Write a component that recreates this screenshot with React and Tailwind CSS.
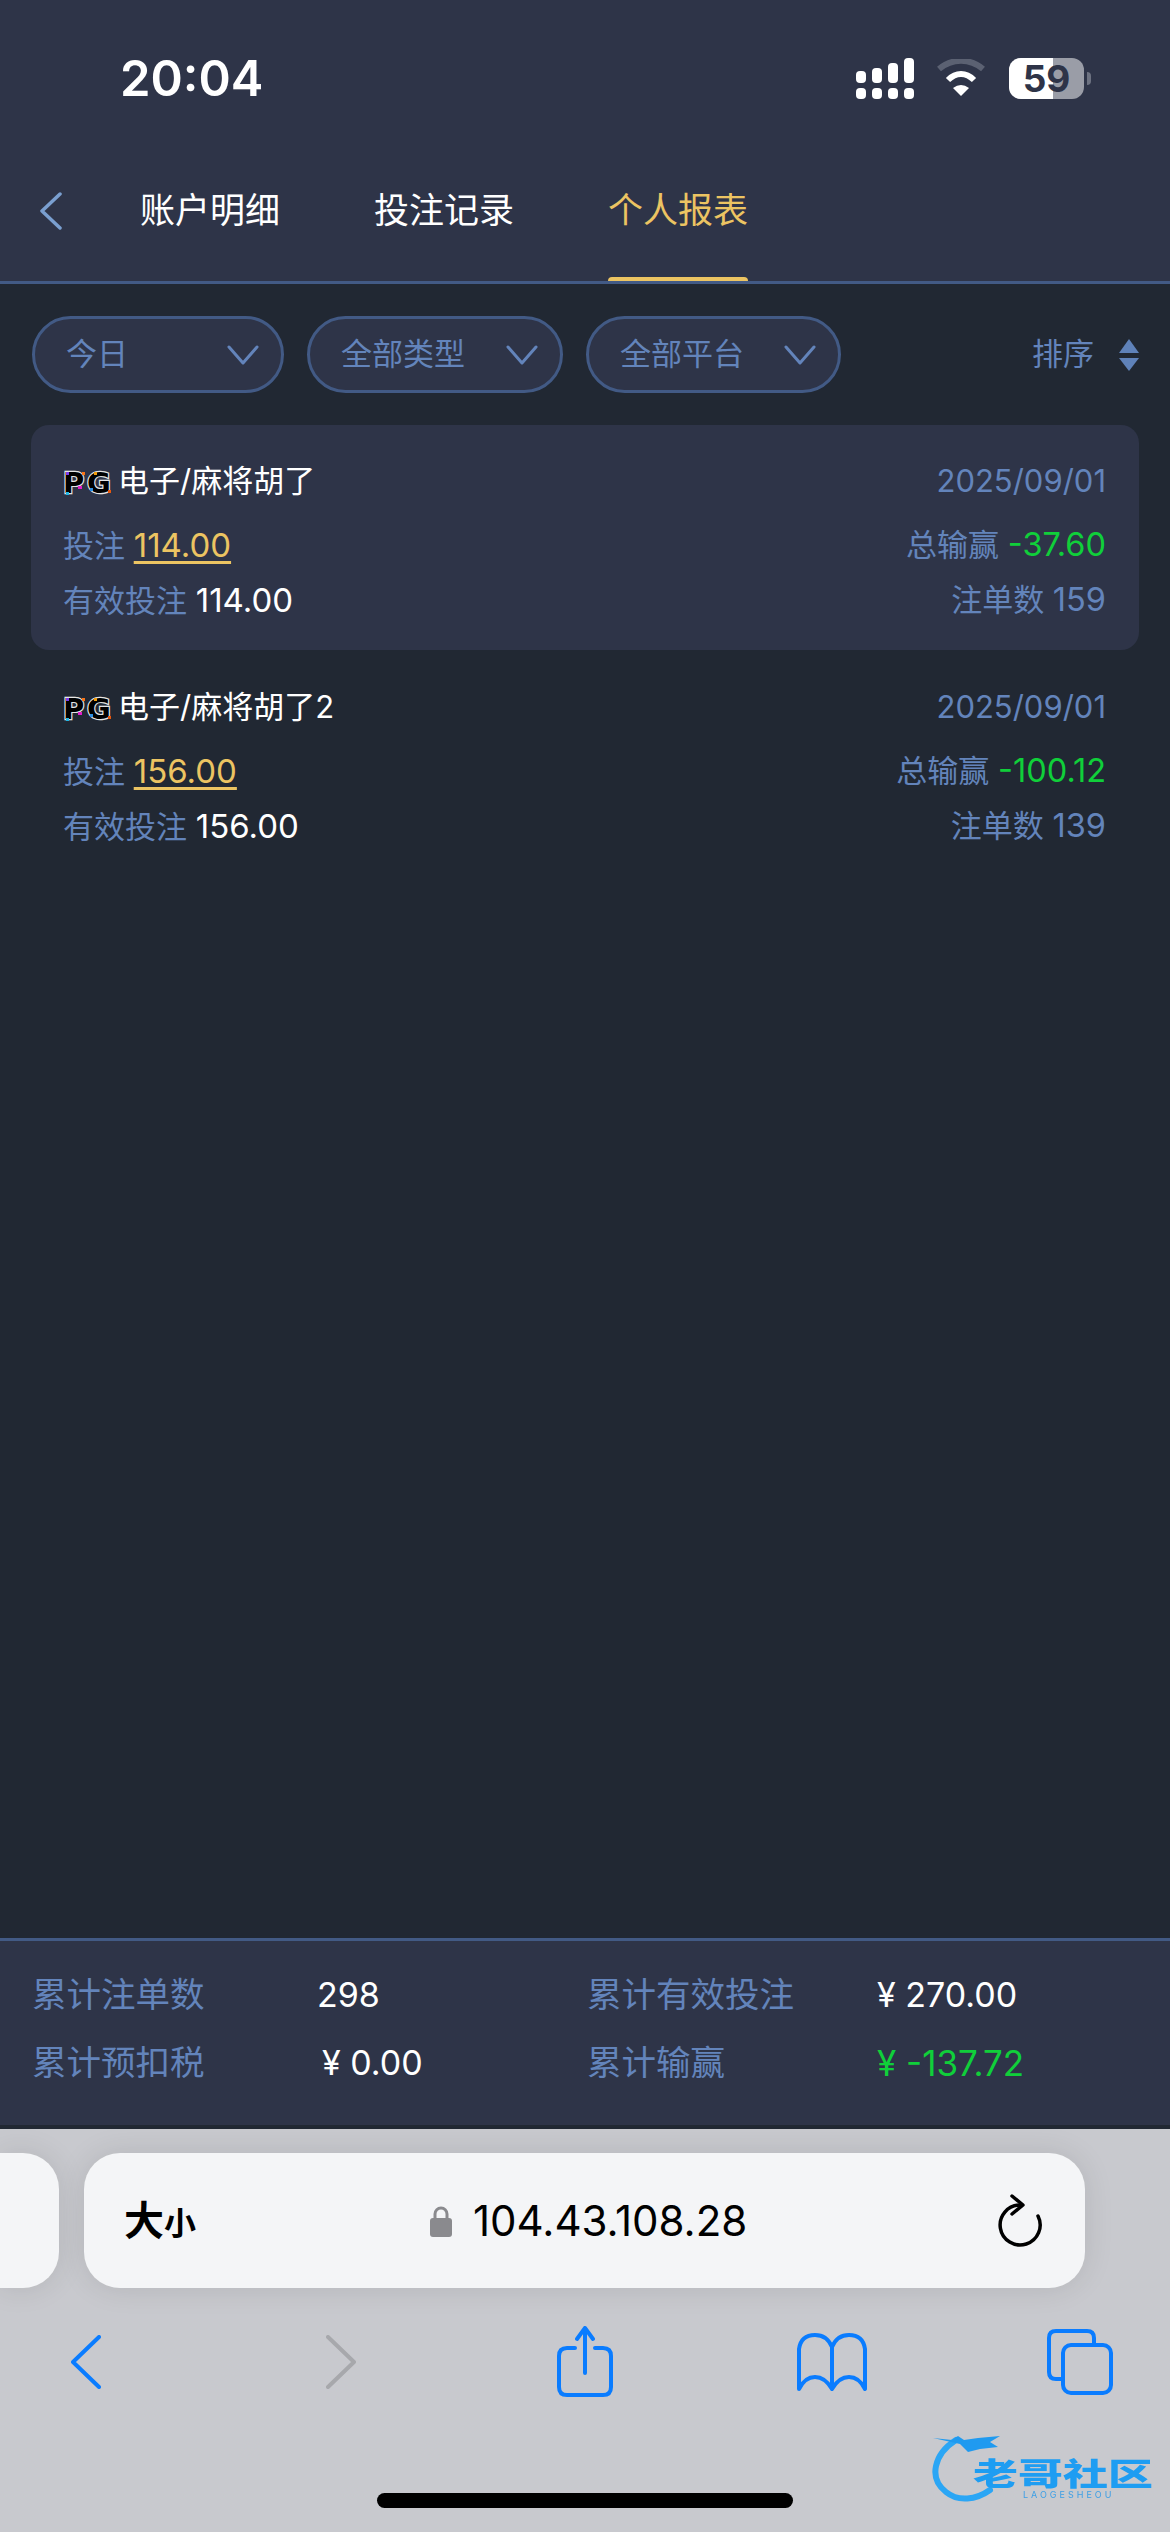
import React from 'react';

const records = [
  {name: '电子/麻将胡了', bet: '114.00', win: '-37.60', count: '159', date: '2025/09/01', active: true},
  {name: '电子/麻将胡了2', bet: '156.00', win: '-100.12', count: '139', date: '2025/09/01', active: false},
];

const PgLogo = () => (
  <svg width="50" height="38" viewBox="0 0 50 38" className="shrink-0">
    <g transform="translate(0 8)">
      <text x="0" y="23" fontFamily="DejaVu Sans" fontWeight="700" fontSize="29" fill="#000" stroke="#e5e5e5" strokeWidth="2.4" paintOrder="stroke">P</text>
      <text x="24" y="23" fontFamily="DejaVu Sans" fontWeight="700" fontSize="29" fill="#000" stroke="#e5e5e5" strokeWidth="2.4" paintOrder="stroke">G</text>
      <rect x="3" y="2" width="3" height="3" fill="#7c3aed" />
      <rect x="19" y="2" width="3" height="3" fill="#f97316" />
      <rect x="15" y="16" width="4" height="3" fill="#e11ecb" />
      <rect x="3" y="22" width="3" height="3" fill="#22b8e6" />
      <rect x="31" y="2" width="3" height="3" fill="#f59e0b" />
      <rect x="27" y="18" width="3" height="3" fill="#2f8ee0" />
      <rect x="45" y="20" width="3" height="3" fill="#ea580c" />
    </g>
  </svg>
);

const Chevron = () => (
  <svg width="32" height="20" viewBox="0 0 32 20" fill="none" stroke="#6384bb" strokeWidth="3" strokeLinecap="round" strokeLinejoin="round" className="shrink-0">
    <path d="M2 2 L16 18 L30 2" />
  </svg>
);

const Filter = ({label, width}) => (
  <div className={`flex items-center justify-between h-[77px] rounded-full border-[3px] border-[#425a85] bg-[#2e3448] pl-[31px] pr-[22px] ${width}`}>
    <span className="text-[31px] text-[#6384bb]">{label}</span>
    <Chevron />
  </div>
);

const RecordCard = ({item}) => (
  <div className={`mx-[31px] h-[225px] pl-[32px] pr-[33px] pt-[36px] rounded-[18px] text-[31px] leading-[40px] text-[#6384bb] ${item.active ? 'bg-[#2e3448]' : ''}`}>
    <div className="flex justify-between h-[40px]">
      <div className="flex items-center gap-[5px] text-white">
        <PgLogo />
        <span>{item.name}</span>
      </div>
      <span>{item.date}</span>
    </div>
    <div className="flex justify-between mt-[24px]">
      <span>投注 <span className="text-[33px] text-[#ecc462] underline underline-offset-[4px] decoration-[3px]">{item.bet}</span></span>
      <span>总输赢 <span className="text-[32.5px] text-[#10cf3a]">{item.win}</span></span>
    </div>
    <div className="flex justify-between mt-[14px]">
      <span>有效投注 <span className="text-[33px] text-white">{item.bet}</span></span>
      <span>注单数 <span className="text-[32.5px]">{item.count}</span></span>
    </div>
  </div>
);

const StatusBar = () => (
  <div className="flex items-center justify-between h-[140px] pt-[16px] pl-[120px] pr-[79px]">
    <span className="text-[49px] font-semibold text-white leading-none font-['Inter']">20:04</span>
    <div className="flex items-center">
      <svg width="58" height="41" viewBox="0 0 58 41" fill="#fff">
        <rect x="0" y="13" width="10" height="12" rx="4" />
        <rect x="16" y="10" width="10" height="15" rx="4" />
        <rect x="32" y="5" width="10" height="20" rx="4" />
        <rect x="48" y="0" width="10" height="25" rx="4" />
        <rect x="0" y="30" width="10" height="11" rx="4" />
        <rect x="16" y="30" width="10" height="11" rx="4" />
        <rect x="32" y="30" width="10" height="11" rx="4" />
        <rect x="48" y="30" width="10" height="11" rx="4" />
      </svg>
      <svg width="50" height="38" viewBox="0 0 50 38" fill="none" className="ml-[22px]">
        <path d="M3 10 C16 -1, 34 -1, 47 10" stroke="#5b6172" strokeWidth="6" />
        <path d="M12 21 C20 13, 30 13, 38 21" stroke="#fff" strokeWidth="6" />
        <path d="M17 29 Q25 23 33 29 L25 37 Z" fill="#fff" />
      </svg>
      <div className="relative ml-[23px] w-[75px] h-[41px] rounded-[12px] bg-[#9a9da7]">
        <div className="w-[44px] h-full rounded-l-[12px] bg-white" />
        <span className="absolute inset-0 flex items-center justify-center text-[37px] leading-none font-bold text-[#2e3448] font-['Inter']">59</span>
      </div>
      <div className="ml-[3px] w-[4px] h-[13px] rounded-r-full bg-[#6d7281]" />
    </div>
  </div>
);

const Tabs = () => (
  <div className="flex items-center h-[141px] pl-[39px]">
    <svg width="24" height="38" viewBox="0 0 24 38" fill="none" stroke="#7a9fd0" strokeWidth="3.5" strokeLinecap="round" strokeLinejoin="round">
      <path d="M21 2 L3 19 L21 36" />
    </svg>
    <div className="flex self-stretch items-center ml-[77px] gap-[94px] text-[35px] text-white">
      <span>账户明细</span>
      <span>投注记录</span>
      <span className="relative self-stretch flex items-center text-[#ecc462]">
        个人报表
        <span className="absolute bottom-0 left-0 right-0 h-[4px] rounded-t-[4px] bg-[#ecc462]" />
      </span>
    </div>
  </div>
);

const Summary = () => (
  <div className="h-[191px] border-t-[3px] border-b-[4px] border-t-[#425a85] border-b-[#212833] bg-[#2e3448] pt-[20px] pl-[32px] text-[34.5px] leading-[68px] text-[#6384bb]">
    <div className="grid grid-cols-[285px_270px_290px_1fr]">
      <span>累计注单数</span>
      <span className="text-white text-[34px]">298</span>
      <span>累计有效投注</span>
      <span className="text-white text-[34px]">¥ 270.00</span>
      <span>累计预扣税</span>
      <span className="text-white text-[34px] pl-[5px]">¥ 0.00</span>
      <span>累计输赢</span>
      <span className="text-[#10cf3a] text-[35px]">¥ -137.72</span>
    </div>
  </div>
);

const Toolbar = () => (
  <div className="flex items-center mt-[38px] h-[71px] pl-[71px]">
    <svg width="30" height="54" viewBox="0 0 30 54" fill="none" stroke="#0a7cff" strokeWidth="4" strokeLinecap="round" strokeLinejoin="round">
      <path d="M28 2 L2 27 L28 52" />
    </svg>
    <svg width="30" height="54" viewBox="0 0 30 54" fill="none" stroke="#a7a8ac" strokeWidth="4" strokeLinecap="round" strokeLinejoin="round" className="ml-[225px]">
      <path d="M2 2 L28 27 L2 52" />
    </svg>
    <svg width="56" height="71" viewBox="0 0 56 71" fill="none" stroke="#0a7cff" strokeWidth="4" strokeLinecap="round" strokeLinejoin="round" className="ml-[201px]">
      <path d="M28 47 V2 M20 13 L28 2 L36 13" />
      <path d="M18 22 H10 Q2 22 2 30 V61 Q2 69 10 69 H46 Q54 69 54 61 V30 Q54 22 46 22 H38" />
    </svg>
    <svg width="70" height="58" viewBox="0 0 70 58" fill="none" stroke="#0a7cff" strokeWidth="4" strokeLinejoin="round" className="ml-[184px]">
      <path d="M35 14 Q30 2 18 2 Q4 2 2 16 V56 Q8 44 18 44 Q28 44 35 56 Q42 44 52 44 Q62 44 68 56 V16 Q66 2 52 2 Q40 2 35 14 V56" />
    </svg>
    <svg width="66" height="66" viewBox="0 0 66 66" fill="none" stroke="#0a7cff" strokeWidth="4" strokeLinejoin="round" className="ml-[180px]">
      <path d="M15 50 H9 Q2 50 2 43 V9 Q2 2 9 2 H40 Q47 2 47 9 V16" />
      <rect x="16" y="16" width="48" height="48" rx="8" />
    </svg>
  </div>
);

const Watermark = () => (
  <div className="absolute left-[930px] top-[2430px] w-[225px] h-[76px] blur-[0.7px]">
    <svg width="100" height="76" viewBox="0 0 100 76" fill="none" className="absolute left-0 top-0">
      <path d="M26 10 C4 24, -2 48, 16 62 C28 72, 46 70, 60 60" stroke="#2ba6f5" strokeWidth="6" strokeLinecap="round" />
      <path d="M3 8 L22 10 L28 6 L34 10 L48 8 L70 6 L60 12 L68 17 L50 19 L38 22 L30 14 Z" fill="#1f9af0" />
    </svg>
    <span className="absolute left-[43px] top-[22px] scale-y-[0.68] whitespace-nowrap text-[45px] leading-[44px] font-black text-[#1e9df2]">老哥社区</span>
    <span className="absolute left-[93px] top-[60px] whitespace-nowrap text-[9px] leading-[10px] tracking-[3px] text-[#3c9fe6]">LAOGESHEOU</span>
  </div>
);

export default function App() {
  return (
    <div className="relative flex flex-col h-[2532px] w-[1170px] overflow-hidden bg-[#212833] font-['Inter','Noto_Sans_CJK_SC',sans-serif]">
      <header className="h-[284px] shrink-0 border-b-[3px] border-[#425a85] bg-[#2e3448]">
        <StatusBar />
        <Tabs />
      </header>

      <main className="flex-1">
        <div className="flex items-center pt-[32px] pb-[32px] pl-[32px] pr-[31px] gap-[23px]">
          <Filter label="今日" width="w-[252px]" />
          <Filter label="全部类型" width="w-[256px]" />
          <Filter label="全部平台" width="w-[255px]" />
          <div className="ml-auto flex items-center gap-[25px] text-[31px] text-[#6384bb]">
            <span>排序</span>
            <svg width="20" height="32" viewBox="0 0 20 32" fill="#5f82b9">
              <path d="M10 0 L20 14 H0 Z" />
              <path d="M0 19 H20 L10 32 Z" />
            </svg>
          </div>
        </div>
        <div className="flex flex-col gap-[1px]">
          {records.map(item => <RecordCard key={item.bet} item={item} />)}
        </div>
      </main>

      <Summary />

      <div className="h-[403px] shrink-0 bg-[#c8c9ce] pt-[24px]">
        <div className="flex gap-[25px]">
          <div className="w-[59px] h-[135px] rounded-r-[36px] bg-[#f4f5f7] shadow-[0_0_30px_rgba(0,0,0,0.1)]" />
          <div className="flex items-center w-[1001px] h-[135px] rounded-[36px] bg-[#f4f5f7] pl-[40px] shadow-[0_0_30px_rgba(0,0,0,0.1)] text-black">
            <span className="w-[74px] text-[40px] font-semibold">大<span className="text-[32px]">小</span></span>
            <svg width="22" height="32" viewBox="0 0 22 32" className="ml-[232px]">
              <path d="M5 14 V9 A6 6 0 0 1 17 9 V14" fill="none" stroke="#8a8a8e" strokeWidth="3" />
              <rect x="0" y="13" width="22" height="19" rx="3" fill="#8a8a8e" />
            </svg>
            <span className="ml-[21px] text-[42px]">104.43.108.28</span>
            <svg width="46" height="54" viewBox="0 0 46 54" fill="none" stroke="#000" strokeWidth="3.5" strokeLinecap="round" strokeLinejoin="round" className="ml-auto mr-[42px]">
              <path d="M23 11 A20 20 0 1 0 41 22" />
              <path d="M15 2 L26 11 L15 20" />
            </svg>
          </div>
        </div>
        <Toolbar />
        <div className="mt-[96px] mx-auto w-[416px] h-[15px] rounded-full bg-black" />
      </div>

      <Watermark />
    </div>
  );
}
